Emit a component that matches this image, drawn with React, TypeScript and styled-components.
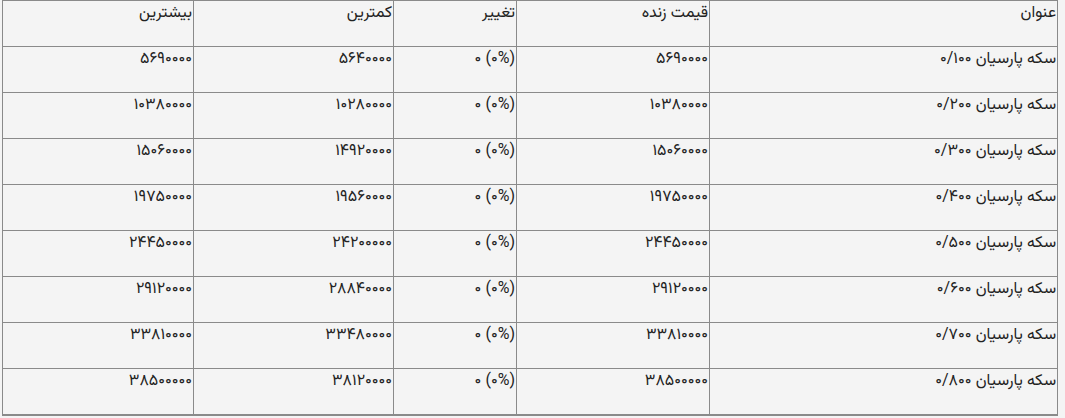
import styled, { createGlobalStyle } from 'styled-components';

const GlobalStyle = createGlobalStyle`
  html, body {
    margin: 0;
    padding: 0;
    background: #f4f4f4;
  }
  body {
    font-family: "Vazirmatn", "Noto Sans Arabic", "DejaVu Sans", sans-serif;
    color: #222;
  }
`;

const Page = styled.div`
  padding: 0 7px 0 2px;
  direction: rtl;
`;

const PriceTable = styled.table`
  width: 100%;
  border-collapse: collapse;
  table-layout: fixed;
  font-size: 16px;
  border-bottom: 2px solid #8a8a8a;
`;

const Cell = styled.td`
  box-sizing: border-box;
  border: 1px solid #8a8a8a;
  height: 46px;
  padding: 3px 1px 0 1px;
  vertical-align: top;
  text-align: right;
  line-height: 20px;
  white-space: nowrap;
`;

const HeadCell = styled(Cell).attrs({ as: 'th' })`
  font-weight: normal;
`;

type Row = { title: string; live: string; min: string; max: string };

const rows: Row[] = [
  { title: '۰/۱۰۰', live: '۵۶۹۰۰۰۰', min: '۵۶۴۰۰۰۰', max: '۵۶۹۰۰۰۰' },
  { title: '۰/۲۰۰', live: '۱۰۳۸۰۰۰۰', min: '۱۰۲۸۰۰۰۰', max: '۱۰۳۸۰۰۰۰' },
  { title: '۰/۳۰۰', live: '۱۵۰۶۰۰۰۰', min: '۱۴۹۲۰۰۰۰', max: '۱۵۰۶۰۰۰۰' },
  { title: '۰/۴۰۰', live: '۱۹۷۵۰۰۰۰', min: '۱۹۵۶۰۰۰۰', max: '۱۹۷۵۰۰۰۰' },
  { title: '۰/۵۰۰', live: '۲۴۴۵۰۰۰۰', min: '۲۴۲۰۰۰۰۰', max: '۲۴۴۵۰۰۰۰' },
  { title: '۰/۶۰۰', live: '۲۹۱۲۰۰۰۰', min: '۲۸۸۴۰۰۰۰', max: '۲۹۱۲۰۰۰۰' },
  { title: '۰/۷۰۰', live: '۳۳۸۱۰۰۰۰', min: '۳۳۴۸۰۰۰۰', max: '۳۳۸۱۰۰۰۰' },
  { title: '۰/۸۰۰', live: '۳۸۵۰۰۰۰۰', min: '۳۸۱۲۰۰۰۰', max: '۳۸۵۰۰۰۰۰' },
];

export default () => (
  <Page>
    <GlobalStyle />
    <PriceTable>
      <colgroup>
        <col style={{ width: 348 }} />
        <col style={{ width: 193 }} />
        <col style={{ width: 123 }} />
        <col style={{ width: 200 }} />
        <col />
      </colgroup>
      <thead>
        <tr>
          <HeadCell>عنوان</HeadCell>
          <HeadCell>قیمت زنده</HeadCell>
          <HeadCell>تغییر</HeadCell>
          <HeadCell>کمترین</HeadCell>
          <HeadCell>بیشترین</HeadCell>
        </tr>
      </thead>
      <tbody>
        {rows.map((r) => (
          <tr key={r.title}>
            <Cell>سکه پارسیان {r.title}</Cell>
            <Cell>{r.live}</Cell>
            <Cell>(۰%) ۰</Cell>
            <Cell>{r.min}</Cell>
            <Cell>{r.max}</Cell>
          </tr>
        ))}
      </tbody>
    </PriceTable>
  </Page>
);
